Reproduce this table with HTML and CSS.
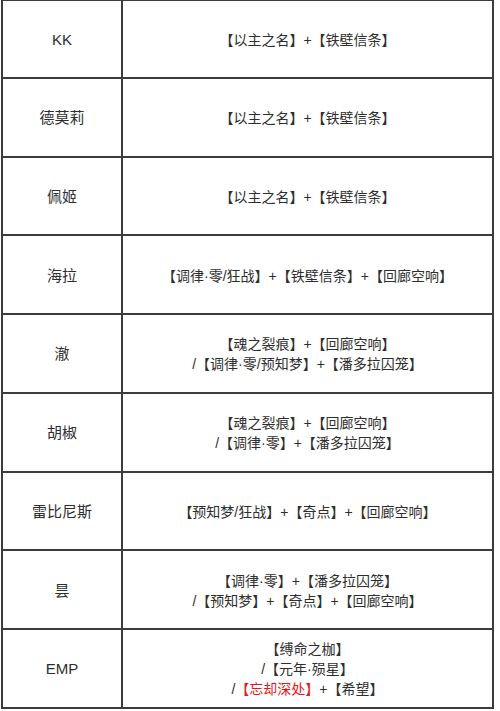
FILE: index.html
```html
<!DOCTYPE html>
<html lang="zh-CN">
<head>
<meta charset="utf-8">
<link rel="stylesheet" href="styles.css">
</head>
<body>
<div class="table">
  <div class="row"><div class="name"><p>KK</p></div><div class="combo"><p>【以主之名】+【铁壁信条】</p></div></div>
  <div class="row"><div class="name"><p>德莫莉</p></div><div class="combo"><p>【以主之名】+【铁壁信条】</p></div></div>
  <div class="row"><div class="name"><p>佩姬</p></div><div class="combo"><p>【以主之名】+【铁壁信条】</p></div></div>
  <div class="row"><div class="name"><p>海拉</p></div><div class="combo"><p>【调律·零/狂战】+【铁壁信条】+【回廊空响】</p></div></div>
  <div class="row"><div class="name"><p>澈</p></div><div class="combo"><p>【魂之裂痕】+【回廊空响】<br>/【调律·零/预知梦】+【潘多拉囚笼】</p></div></div>
  <div class="row"><div class="name"><p>胡椒</p></div><div class="combo"><p>【魂之裂痕】+【回廊空响】<br>/【调律·零】+【潘多拉囚笼】</p></div></div>
  <div class="row"><div class="name"><p>雷比尼斯</p></div><div class="combo"><p>【预知梦/狂战】+【奇点】+【回廊空响】</p></div></div>
  <div class="row"><div class="name"><p>昙</p></div><div class="combo"><p>【调律·零】+【潘多拉囚笼】<br>/【预知梦】+【奇点】+【回廊空响】</p></div></div>
  <div class="row"><div class="name"><p>EMP</p></div><div class="combo"><p>【缚命之枷】<br>/【元年·殒星】<br>/<span class="red">【忘却深处】</span>+【希望】</p></div></div>
</div>
</body>
</html>
```
FILE: styles.css
```css
html, body {
  margin: 0;
  padding: 0;
  background: #ffffff;
}
body {
  font-family: "Liberation Sans", "Noto Sans CJK SC", sans-serif;
  font-size: 14px;
  color: #2e2e2e;
  overflow: hidden;
}
p {
  margin: 0;
}
.table {
  width: 493px;
  margin: -1px 0 0 1px;
  border-top: 2px solid #3c3c3c;
  border-left: 2px solid #3c3c3c;
  box-sizing: border-box;
}
.row {
  display: grid;
  grid-template-columns: 120px 1fr;
  height: 78.75px;
  box-sizing: border-box;
  border-bottom: 2px solid #3c3c3c;
}
.row:first-child {
  height: 77.75px;
}
.name, .combo {
  display: flex;
  align-items: center;
  justify-content: center;
  text-align: center;
  line-height: 20px;
  padding-top: 2px;
  border-right: 2px solid #3c3c3c;
}
.name {
  font-size: 15px;
}
.red {
  color: #e8161b;
}
```
